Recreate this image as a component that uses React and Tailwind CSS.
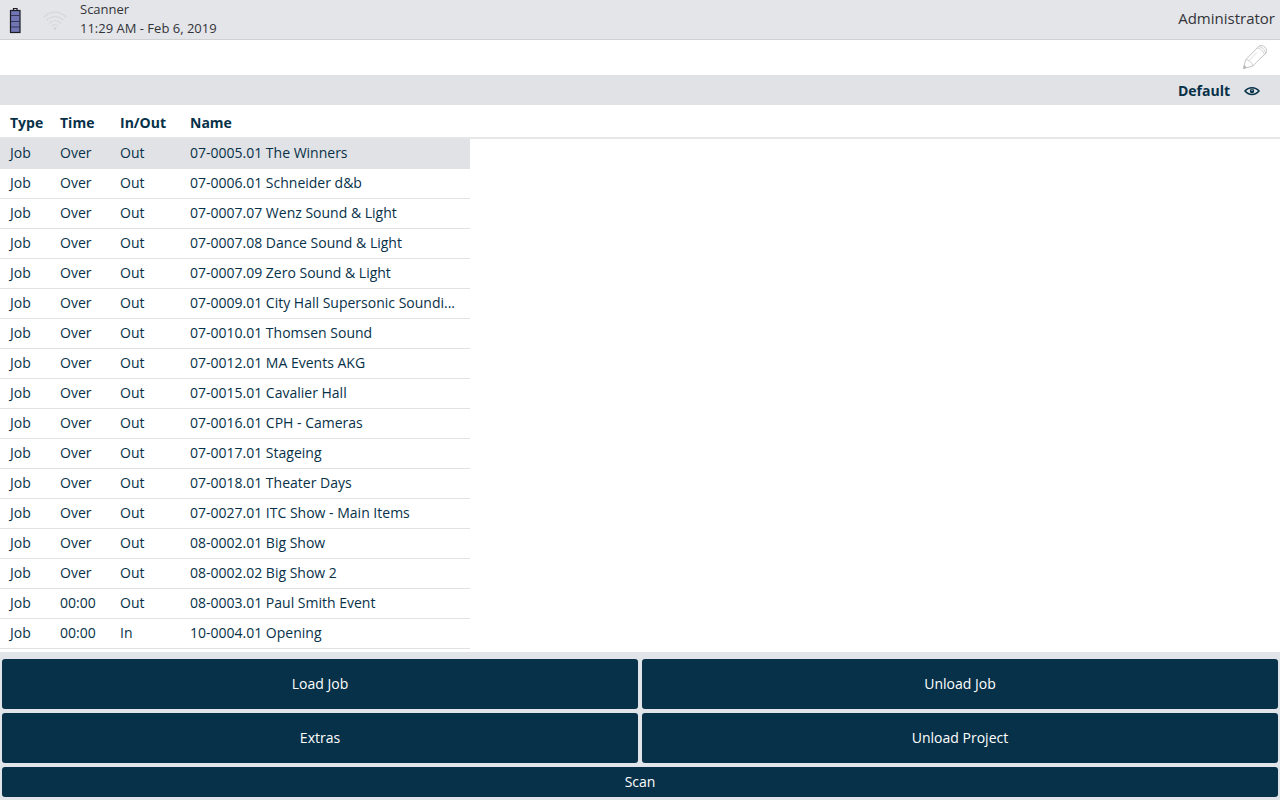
import React, { useState } from 'react';

const JOBS = [
    { time: 'Over', direction: 'Out', name: '07-0005.01 The Winners' },
    { time: 'Over', direction: 'Out', name: '07-0006.01 Schneider d&b' },
    { time: 'Over', direction: 'Out', name: '07-0007.07 Wenz Sound & Light' },
    { time: 'Over', direction: 'Out', name: '07-0007.08 Dance Sound & Light' },
    { time: 'Over', direction: 'Out', name: '07-0007.09 Zero Sound & Light' },
    { time: 'Over', direction: 'Out', name: '07-0009.01 City Hall Supersonic Soundi...' },
    { time: 'Over', direction: 'Out', name: '07-0010.01 Thomsen Sound' },
    { time: 'Over', direction: 'Out', name: '07-0012.01 MA Events AKG' },
    { time: 'Over', direction: 'Out', name: '07-0015.01 Cavalier Hall' },
    { time: 'Over', direction: 'Out', name: '07-0016.01 CPH - Cameras' },
    { time: 'Over', direction: 'Out', name: '07-0017.01 Stageing' },
    { time: 'Over', direction: 'Out', name: '07-0018.01 Theater Days' },
    { time: 'Over', direction: 'Out', name: '07-0027.01 ITC Show - Main Items' },
    { time: 'Over', direction: 'Out', name: '08-0002.01 Big Show' },
    { time: 'Over', direction: 'Out', name: '08-0002.02 Big Show 2' },
    { time: '00:00', direction: 'Out', name: '08-0003.01 Paul Smith Event' },
    { time: '00:00', direction: 'In', name: '10-0004.01 Opening' },
];

const BatteryIcon = () => (
    <svg className="w-3 h-7" viewBox="0 0 12 28" fill="none" aria-hidden="true">
        <path d="M4.500 4V2.500h3.500v1.500" stroke="#1b1b26" strokeWidth="1.200" />
        <rect x="1.500" y="4.500" width="9.500" height="22" fill="#7176b3" stroke="#1b1b26" strokeWidth="1.200" />
        <path d="M2 9.500h9M2 15.500h9M2 21h9" stroke="#34365a" />
    </svg>
);

const WifiIcon = () => (
    <svg className="w-6 h-5" viewBox="0 0 24 20" fill="none" stroke="#d7d8da" strokeWidth="1.200" strokeLinecap="round" aria-hidden="true">
        <path d="M1 7C7 0.500 17 0.500 23 7" />
        <path d="M4 10c4.500-4.500 11.500-4.500 16 0" />
        <path d="M6.500 13c3-3 8-3 11 0" />
        <path d="M9 16c1.800-1.600 4.200-1.600 6 0" />
        <circle cx="12" cy="18.500" r="1.200" fill="#d0d1d3" stroke="none" />
    </svg>
);

const PencilIcon = () => (
    <svg className="w-6 h-6" viewBox="0 0 24 24" fill="none" stroke="#c4c4c4" strokeLinejoin="round" aria-hidden="true">
        <path d="M0.500 23.500L2.500 15L15.500 1.500C17 0 20 0.200 22 2.200C23.800 4 24 6.500 23 8L9.500 21.200Z" />
        <path d="M2.500 15C5.500 14 10 18 9.500 21.200" strokeWidth="0.800" />
        <path d="M6 15.500L14 7.500" strokeWidth="0.600" />
        <path d="M14 3C17 3 21 6.500 21.200 9.500M15.800 1.500C19 1.800 22.300 5 22.600 8" strokeWidth="0.800" />
        <path d="M0.500 23.500L1.300 20.200L3.500 22.500Z" fill="#a8a8a8" />
    </svg>
);

const EyeIcon = () => (
    <svg className="w-4 h-3" viewBox="0 0 16 12" fill="none" stroke="#073148" aria-hidden="true">
        <path d="M1 6C4.500 1.500 11.500 1.500 15 6C11.500 10.500 4.500 10.500 1 6Z" strokeWidth="1.500" />
        <circle cx="8" cy="6" r="2.200" fill="#073148" stroke="none" />
        <circle cx="8" cy="5.300" r="0.700" fill="#e1e2e6" stroke="none" />
    </svg>
);

const ActionButton = ({ className = 'h-[50px]', children }) => (
    <button type="button" className={`rounded-[3px] bg-[#073148] text-sm text-white hover:bg-[#0c4260] ${className}`}>
        {children}
    </button>
);

const JobTable = () => {
    const [selected, setSelected] = useState(0);

    return (
        <table className="w-full table-fixed border-separate border-spacing-0 text-left text-sm">
            <colgroup>
                <col className="w-[50px]" />
                <col className="w-[60px]" />
                <col className="w-[70px]" />
                <col className="w-[290px]" />
                <col />
            </colgroup>
            <thead>
                <tr className="h-[34px] font-bold">
                    <th scope="col" className="border-b-2 border-[#e5e6e7] pt-1 pl-2.5">Type</th>
                    <th scope="col" className="border-b-2 border-[#e5e6e7] pt-1 pl-2.5">Time</th>
                    <th scope="col" className="border-b-2 border-[#e5e6e7] pt-1 pl-2.5">In/Out</th>
                    <th scope="col" className="border-b-2 border-[#e5e6e7] pt-1 pl-2.5">Name</th>
                    <td className="border-b-2 border-[#e5e6e7]" />
                </tr>
            </thead>
            <tbody>
                {JOBS.map((job, index) => {
                    const cell = `border-b border-[#e1e2e6] pb-0.5 pl-2.5 ${index === selected ? 'bg-[#e1e2e6]' : ''}`;
                    return (
                        <tr key={job.name} className="h-[30px]" onClick={() => setSelected(index)}>
                            <td className={cell}>Job</td>
                            <td className={cell}>{job.time}</td>
                            <td className={cell}>{job.direction}</td>
                            <td className={`${cell} truncate`}>{job.name}</td>
                            <td />
                        </tr>
                    );
                })}
            </tbody>
        </table>
    );
};

const App = () => (
    <div className="flex h-screen flex-col bg-white font-['Open_Sans',sans-serif] text-[#073148]">
        <header className="flex h-10 shrink-0 items-center border-b border-[#cfd0d2] bg-[#e4e5e9] pr-[5px] pl-[9px] text-[#333438]">
            <BatteryIcon />
            <div className="ml-[22px]">
                <WifiIcon />
            </div>
            <div className="ml-[13px] flex-1 pb-0.5 text-[13px] leading-[19px]">
                <div>Scanner</div>
                <div>11:29 AM - Feb 6, 2019</div>
            </div>
            <span className="pb-0.5 text-[15px]">Administrator</span>
        </header>

        <div className="flex h-[35px] shrink-0 items-center justify-end pr-[13px] pb-0.5">
            <button type="button" aria-label="Edit">
                <PencilIcon />
            </button>
        </div>

        <div className="flex h-[30px] shrink-0 items-center justify-end bg-[#e1e2e6] pt-0.5 pr-5">
            <button type="button" className="flex items-center gap-3.5 text-sm font-bold">
                Default
                <EyeIcon />
            </button>
        </div>

        <main className="min-h-0 flex-1 overflow-hidden">
            <JobTable />
        </main>

        <footer className="grid shrink-0 grid-cols-2 gap-1 bg-[#e1e4e8] px-0.5 pt-[7px] pb-[3px]">
            <ActionButton>Load Job</ActionButton>
            <ActionButton>Unload Job</ActionButton>
            <ActionButton>Extras</ActionButton>
            <ActionButton>Unload Project</ActionButton>
            <ActionButton className="col-span-2 h-[30px]">Scan</ActionButton>
        </footer>
    </div>
);

export default App;
